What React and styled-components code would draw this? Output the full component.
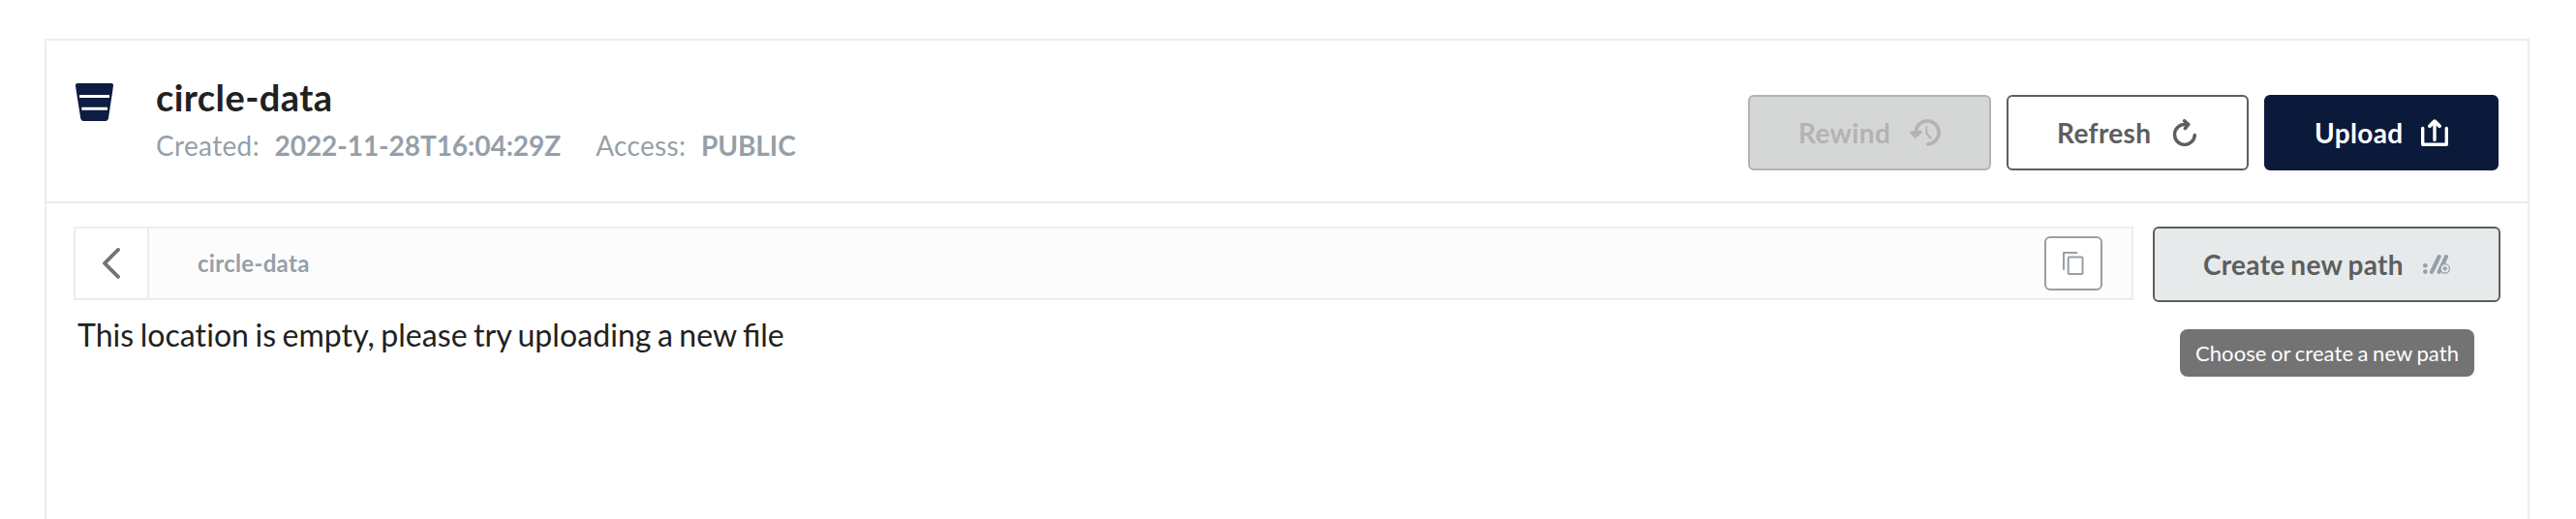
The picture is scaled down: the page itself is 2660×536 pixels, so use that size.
import React from 'react';
import styled, { createGlobalStyle } from 'styled-components';

const colors = {
  line: '#eaeded',
  muted: '#969fa8',
  ink: '#212121',
  grey: '#5e5e5e',
  navy: '#0b193a',
};

const GlobalStyle = createGlobalStyle`
  *, *::before, *::after { box-sizing: border-box; }
  html, body, #root { height: 100%; }
  body {
    margin: 0;
    overflow: hidden;
    background: #fff;
    color: ${colors.ink};
    font-family: Lato, "Liberation Sans", sans-serif;
  }
  svg { display: block; flex: none; }
`;

const Page = styled.div`
  height: 100vh;
  padding: 40px 48px 0 46px;
`;

const Panel = styled.section`
  height: 100%;
  border: 2px solid ${colors.line};
  border-bottom: 0;
`;

const Header = styled.header`
  display: flex;
  align-items: flex-start;
  height: 168px;
  padding: 35px 30px 0;
  border-bottom: 2px solid ${colors.line};
`;

const BucketMark = styled.div`
  width: 83px;
  padding-top: 9px;
`;

const Heading = styled.div`
  flex: 1;
`;

const Title = styled.h1`
  margin: 0 0 10px;
  font-size: 38px;
  line-height: 46px;
  font-weight: 700;
  letter-spacing: 0.42px;
`;

const Details = styled.dl`
  display: flex;
  margin: 0;
  color: ${colors.muted};
  font-size: 28px;
  line-height: 34px;
  white-space: nowrap;
`;

const Term = styled.dt`
  margin-right: 15.5px;
  letter-spacing: 0.35px;
`;

const Detail = styled.dd`
  margin: 0 36px 0 0;
  font-weight: 700;
  letter-spacing: -0.04px;
`;

const Actions = styled.div`
  display: flex;
  gap: 16px;
  padding-top: 21px;
`;

const variants = {
  outline: `background: #fff; border-color: ${colors.grey}; color: ${colors.grey};`,
  primary: `background: ${colors.navy}; border-color: ${colors.navy}; color: #fff;`,
  disabled: 'background: #d5d7d6; border-color: #b3b3b3; color: #b3b3b3;',
  hover: `background: #e6eaea; border-color: ${colors.grey}; color: ${colors.grey};`,
};

const Button = styled.button`
  display: flex;
  align-items: center;
  justify-content: space-between;
  width: ${(p) => p.$width}px;
  height: 78px;
  padding: 0 50px;
  border: 2px solid;
  border-radius: 6px;
  font: 700 28px/34px Lato, "Liberation Sans", sans-serif;
  letter-spacing: ${(p) => p.$tracking || 0.35}px;
  word-spacing: -1.3px;
  white-space: nowrap;
  ${(p) => variants[p.$variant]}
`;

const Browser = styled.div`
  display: flex;
  gap: 20px;
  padding: 24px 28px 0;
`;

const PathBar = styled.div`
  display: flex;
  align-items: center;
  flex: 1;
  height: 76px;
  padding-right: 30px;
  border: 2px solid ${colors.line};
  background: #fcfcfc;
`;

const BackButton = styled.button`
  display: flex;
  align-items: center;
  justify-content: center;
  width: 76px;
  height: 100%;
  padding: 0;
  border: 0;
  border-right: 2px solid ${colors.line};
  background: #fff;
`;

const Crumb = styled.span`
  flex: 1;
  padding-left: 50px;
  color: ${colors.muted};
  font-size: 24px;
  line-height: 30px;
  font-weight: 700;
  letter-spacing: 0.3px;
`;

const CopyButton = styled.button`
  display: flex;
  align-items: center;
  justify-content: center;
  width: 60px;
  height: 56px;
  padding: 0;
  border: 2px solid ${colors.muted};
  border-radius: 6px;
  background: #fff;
`;

const TooltipAnchor = styled.div`
  position: relative;
`;

const Tooltip = styled.div`
  position: absolute;
  top: 106px;
  left: 28px;
  width: 304px;
  height: 49px;
  border-radius: 8px;
  background: #737373;
  color: #fff;
  font-size: 22px;
  line-height: 49px;
  letter-spacing: 0.1px;
  word-spacing: -1.3px;
  text-align: center;
  white-space: nowrap;
`;

const Empty = styled.p`
  margin: 14px 0 0 32px;
  font-size: 32px;
  line-height: 39px;
  letter-spacing: 0.07px;
  word-spacing: -1.9px;
`;

const LastWord = styled.span`
  letter-spacing: 0;
`;

const BucketIcon = () => (
  <svg width="39" height="39" viewBox="0 0 39 39" fill="#0d1c40">
    <path d="M2 0H37Q39.2 0 39 2.2L38.4 7L33.9 36.6Q33.5 39 31.2 39H8Q5.7 39 5.3 36.6L0.6 7L0 2.2Q-0.2 0 2 0Z" />
    <path d="M4 12H35V15H4ZM6.3 24.8H33V27.8H6.3Z" fill="#fff" />
  </svg>
);

const RewindIcon = () => (
  <svg width="32" height="28" viewBox="0 0 32 28" fill="none" stroke="currentColor" strokeLinecap="round" strokeLinejoin="round">
    <path d="M6.2 15.5A12 12 0 1 1 18.8 25.9" strokeWidth="3.6" />
    <path d="M1.8 13.8L5.7 18L11.2 13.2L6.2 13.8Z" fill="currentColor" strokeWidth="3.2" />
    <path d="M17.4 8V14.8L22 20" strokeWidth="2" />
  </svg>
);

const RefreshIcon = () => (
  <svg width="28" height="28" viewBox="0 0 28 28" fill="none" stroke="currentColor" strokeWidth="3.5" strokeLinecap="round" strokeLinejoin="round">
    <path d="M24.3 16.4A10.4 10.4 0 1 1 14 5.6H17.6" />
    <path d="M13.6 1.8L17.8 5.5L14.4 9.7" />
  </svg>
);

const UploadIcon = () => (
  <svg width="28" height="28" viewBox="0 0 28 28" fill="none" stroke="currentColor" strokeWidth="3.4" strokeLinecap="round" strokeLinejoin="round">
    <path d="M1.7 9.4V26.3H26.3V9.4" />
    <path d="M14 3V21.4" />
    <path d="M9 7.2L14 2.2L19 7.2" strokeWidth="3.8" />
  </svg>
);

const NewPathIcon = () => (
  <svg width="28" height="20" viewBox="0 0 28 20">
    <g fill={colors.muted}>
      <circle cx="2.3" cy="11.3" r="2.3" />
      <circle cx="2.3" cy="17.6" r="2.3" />
    </g>
    <path d="M9 17.8L16.6 2.2M16.6 17.8L24 2.2" stroke={colors.muted} strokeWidth="4.1" strokeLinecap="round" />
    <circle cx="22.7" cy="14.4" r="4.7" fill="#e6eaea" stroke={colors.muted} strokeWidth="1.2" />
    <path d="M20.4 14.4H25M22.7 12.1V16.7" stroke={colors.muted} strokeWidth="1.6" />
  </svg>
);

const ChevronIcon = () => (
  <svg width="18" height="32" viewBox="0 0 18 32" fill="none" stroke="#737373" strokeWidth="3.8" strokeLinecap="round" strokeLinejoin="round">
    <path d="M16 1.9L2 15.8L16 29.8" />
  </svg>
);

const CopyIcon = () => (
  <svg width="22" height="24" viewBox="0 0 22 24" fill="none" stroke={colors.muted} strokeWidth="2" strokeLinejoin="round">
    <path d="M15.2 1H1V18.8" />
    <rect x="5.7" y="5.4" width="14.8" height="17.5" rx="1" />
  </svg>
);

export default function App() {
  return (
    <Page>
      <GlobalStyle />
      <Panel>
        <Header>
          <BucketMark>
            <BucketIcon />
          </BucketMark>
          <Heading>
            <Title>circle-data</Title>
            <Details>
              <Term>Created:</Term>
              <Detail>2022-11-28T16:04:29Z</Detail>
              <Term>Access:</Term>
              <Detail>PUBLIC</Detail>
            </Details>
          </Heading>
          <Actions>
            <Button $variant="disabled" $width={251}>
              Rewind
              <RewindIcon />
            </Button>
            <Button $variant="outline" $width={250}>
              Refresh
              <RefreshIcon />
            </Button>
            <Button $variant="primary" $width={242}>
              Upload
              <UploadIcon />
            </Button>
          </Actions>
        </Header>
        <Browser>
          <PathBar>
            <BackButton aria-label="Back">
              <ChevronIcon />
            </BackButton>
            <Crumb>circle-data</Crumb>
            <CopyButton aria-label="Copy path">
              <CopyIcon />
            </CopyButton>
          </PathBar>
          <TooltipAnchor>
            <Button $variant="hover" $width={359} $tracking={0.3}>
              Create new path
              <NewPathIcon />
            </Button>
            <Tooltip role="tooltip">Choose or create a new path</Tooltip>
          </TooltipAnchor>
        </Browser>
        <Empty>
          This location is empty, please try uploading a new <LastWord>file</LastWord>
        </Empty>
      </Panel>
    </Page>
  );
}
